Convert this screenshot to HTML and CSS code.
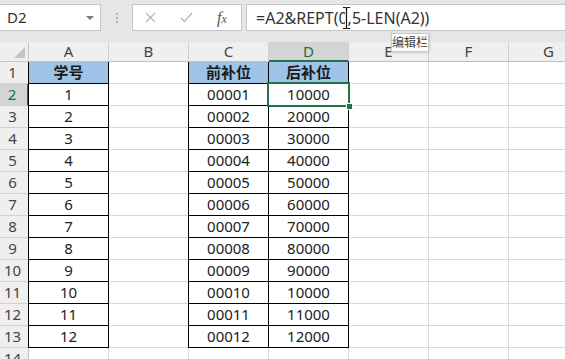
FILE: index.html
```html
<!DOCTYPE html>
<html lang="zh">
<head>
<meta charset="utf-8">
<title>Excel</title>
<link rel="stylesheet" href="styles.css">
</head>
<body>
<div class="bar">
  <div class="namebox"><span class="nb-text">D2</span><span class="nb-arrow"></span></div>
  <div class="sep"><span class="dot"></span><span class="dot"></span><span class="dot"></span></div>
  <div class="fnbox">
    <svg class="ico-x" width="11" height="11" viewBox="0 0 11 11"><path d="M1 1 L10 10 M10 1 L1 10" stroke="#b9b9b9" stroke-width="1.3" fill="none"/></svg>
    <svg class="ico-check" width="13" height="11" viewBox="0 0 13 11"><path d="M1 6 L4.5 9.5 L12 1" stroke="#b9b9b9" stroke-width="1.5" fill="none"/></svg>
    <span class="fx"><span class="fx-f">f</span><span class="fx-x">x</span></span>
  </div>
  <div class="formula"><span class="ftext">=A2&amp;REPT(0,5-LEN(A2))</span></div>
</div>
<svg class="ibeam" width="9" height="24" viewBox="0 0 9 24"><path d="M1 1.5 H3.5 Q4.5 1.5 4.5 3 V21 Q4.5 22.5 3.5 22.5 H1 M8 1.5 H5.5 Q4.5 1.5 4.5 3 M4.5 21 Q4.5 22.5 5.5 22.5 H8" stroke="#fff" stroke-width="3" fill="none"/><path d="M1 1.5 H3.5 Q4.5 1.5 4.5 3 V21 Q4.5 22.5 3.5 22.5 H1 M8 1.5 H5.5 Q4.5 1.5 4.5 3 M4.5 21 Q4.5 22.5 5.5 22.5 H8" stroke="#111" stroke-width="1.2" fill="none"/></svg>
<div class="tip">编辑栏</div>
<div class="sheet">
  <div class="corner"><span class="tri"></span></div>
  <div class="ch">A</div><div class="ch">B</div><div class="ch">C</div><div class="ch sel">D</div><div class="ch">E</div><div class="ch">F</div><div class="ch">G</div>

  <div class="rh">1</div><div class="c t tl h">学号</div><div class="c"></div><div class="c t tl h">前补位</div><div class="c t h">后补位</div><div class="c"></div><div class="c"></div><div class="c"></div>
  <div class="rh sel">2</div><div class="c t tl">1</div><div class="c"></div><div class="c t tl">00001</div><div class="c t active">10000<span class="selbox"></span><span class="handle"></span></div><div class="c"></div><div class="c"></div><div class="c"></div>
  <div class="rh">3</div><div class="c t tl">2</div><div class="c"></div><div class="c t tl">00002</div><div class="c t">20000</div><div class="c"></div><div class="c"></div><div class="c"></div>
  <div class="rh">4</div><div class="c t tl">3</div><div class="c"></div><div class="c t tl">00003</div><div class="c t">30000</div><div class="c"></div><div class="c"></div><div class="c"></div>
  <div class="rh">5</div><div class="c t tl">4</div><div class="c"></div><div class="c t tl">00004</div><div class="c t">40000</div><div class="c"></div><div class="c"></div><div class="c"></div>
  <div class="rh">6</div><div class="c t tl">5</div><div class="c"></div><div class="c t tl">00005</div><div class="c t">50000</div><div class="c"></div><div class="c"></div><div class="c"></div>
  <div class="rh">7</div><div class="c t tl">6</div><div class="c"></div><div class="c t tl">00006</div><div class="c t">60000</div><div class="c"></div><div class="c"></div><div class="c"></div>
  <div class="rh">8</div><div class="c t tl">7</div><div class="c"></div><div class="c t tl">00007</div><div class="c t">70000</div><div class="c"></div><div class="c"></div><div class="c"></div>
  <div class="rh">9</div><div class="c t tl">8</div><div class="c"></div><div class="c t tl">00008</div><div class="c t">80000</div><div class="c"></div><div class="c"></div><div class="c"></div>
  <div class="rh">10</div><div class="c t tl">9</div><div class="c"></div><div class="c t tl">00009</div><div class="c t">90000</div><div class="c"></div><div class="c"></div><div class="c"></div>
  <div class="rh">11</div><div class="c t tl">10</div><div class="c"></div><div class="c t tl">00010</div><div class="c t">10000</div><div class="c"></div><div class="c"></div><div class="c"></div>
  <div class="rh">12</div><div class="c t tl">11</div><div class="c"></div><div class="c t tl">00011</div><div class="c t">11000</div><div class="c"></div><div class="c"></div><div class="c"></div>
  <div class="rh">13</div><div class="c t tl">12</div><div class="c"></div><div class="c t tl">00012</div><div class="c t">12000</div><div class="c"></div><div class="c"></div><div class="c"></div>
  <div class="rh">14</div><div class="c"></div><div class="c"></div><div class="c"></div><div class="c"></div><div class="c"></div><div class="c"></div><div class="c"></div>
</div>
</body>
</html>
```
FILE: styles.css
```css
html, body {
  margin: 0;
  padding: 0;
}
body {
  width: 565px;
  height: 359px;
  overflow: hidden;
  background: #ffffff;
  position: relative;
  font-family: "Noto Sans", "Noto Sans CJK SC", sans-serif;
  color: #222;
}
.bar {
  height: 42px;
  box-sizing: border-box;
  padding-top: 4px;
  background: #e6e6e6;
  display: flex;
  align-items: flex-start;
}
.namebox {
  width: 101px;
  height: 27px;
  box-sizing: border-box;
  background: #fff;
  border: 1px solid #c6c6c6;
  border-left: none;
  display: flex;
  align-items: center;
  justify-content: space-between;
  padding: 0 6px 0 7px;
}
.nb-text {
  font-size: 15px;
  color: #333;
  line-height: 25px;
}
.nb-arrow {
  width: 0;
  height: 0;
  border-left: 4px solid transparent;
  border-right: 4px solid transparent;
  border-top: 4px solid #7a7a7a;
}
.sep {
  width: 31px;
  height: 27px;
  display: flex;
  flex-direction: column;
  align-items: center;
  justify-content: center;
  gap: 2px;
}
.dot {
  width: 2px;
  height: 2px;
  background: #b3b3b3;
}
.fnbox {
  width: 110px;
  height: 27px;
  box-sizing: border-box;
  background: #fff;
  border: 1px solid #c6c6c6;
  display: flex;
  align-items: center;
}
.ico-x {
  margin-left: 12px;
}
.ico-check {
  margin-left: 24px;
}
.fx {
  margin-left: 24px;
  font-family: "Liberation Serif", serif;
  font-style: italic;
  color: #555;
  line-height: 1;
}
.fx-f {
  font-size: 16px;
}
.fx-x {
  font-size: 12px;
}
.formula {
  flex: 1;
  margin-left: 4px;
  height: 27px;
  box-sizing: border-box;
  background: #fff;
  border: 1px solid #c6c6c6;
  border-right: none;
  padding-left: 9px;
  display: flex;
  align-items: center;
}
.ftext {
  font-size: 16px;
  color: #333;
  white-space: nowrap;
}
.ibeam {
  position: absolute;
  left: 342px;
  top: 6px;
}
.tip {
  position: absolute;
  left: 391px;
  top: 33px;
  width: 38px;
  height: 19px;
  box-sizing: border-box;
  background: #fff;
  border: 1px solid #c9c9c9;
  box-shadow: 1px 1px 2px rgba(0,0,0,0.15);
  font-size: 12px;
  line-height: 17px;
  color: #444;
  text-align: center;
  z-index: 5;
}
.sheet {
  display: grid;
  grid-template-columns: 29px repeat(7, 80px);
  grid-template-rows: 20px repeat(14, 22px);
}
.sheet > div {
  box-sizing: border-box;
  border-right: 1px solid #d9d9d9;
  border-bottom: 1px solid #d9d9d9;
  font-size: 15px;
  text-align: center;
  white-space: nowrap;
}
.sheet > .corner {
  background: #efefef;
  border-right: 1px solid #c6c6c6;
  border-bottom: 1px solid #c6c6c6;
  position: relative;
}
.tri {
  position: absolute;
  right: 3px;
  bottom: 3px;
  width: 0;
  height: 0;
  border-left: 11px solid transparent;
  border-bottom: 11px solid #c3c3c3;
}
.sheet > .ch {
  background: #efefef;
  border-right: 1px solid #d0d0d0;
  border-bottom: 1px solid #bfbfbf;
  color: #444;
  line-height: 19px;
}
.sheet > .ch.sel {
  background: #d4d4d4;
  color: #1e6e42;
  border-bottom: 2px solid #217346;
  line-height: 18px;
}
.sheet > .rh {
  background: #efefef;
  border-right: 1px solid #bfbfbf;
  border-bottom: 1px solid #d0d0d0;
  color: #444;
  line-height: 21px;
  padding-right: 3px;
}
.sheet > .rh.sel {
  background: #d4d4d4;
  color: #1e6e42;
  border-right: 2px solid #217346;
}
.sheet > .c {
  line-height: 21px;
  color: #222;
}
.sheet > .t {
  border-right-color: #000;
  border-bottom-color: #000;
}
.sheet > .tl {
  box-shadow: -1px 0 0 #000;
}
.sheet > .h {
  background: #9dc3e6;
  font-weight: bold;
  color: #1a1a1a;
}
.sheet > .active {
  position: relative;
}
.selbox {
  position: absolute;
  left: -2px;
  top: -2px;
  right: -2px;
  bottom: -2px;
  border: 2px solid #217346;
}
.handle {
  position: absolute;
  right: -5px;
  bottom: -5px;
  width: 5px;
  height: 5px;
  background: #217346;
  border: 1px solid #fff;
  z-index: 2;
}
```
